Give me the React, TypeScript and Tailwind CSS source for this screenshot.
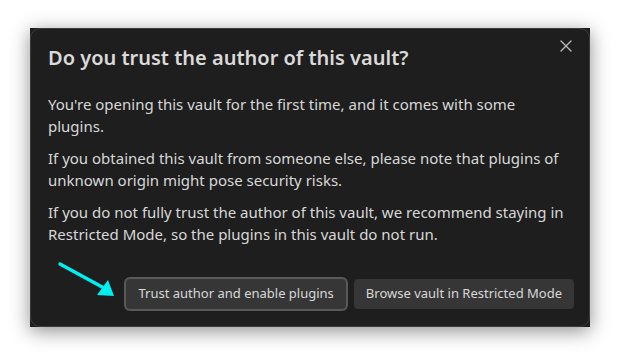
import React from 'react';

const font = { fontFamily: '"Noto Sans", "Open Sans", sans-serif' };

function CloseIcon() {
  return (
    <svg width="12" height="12" viewBox="0 0 12 12" className="text-[#b8b8b8]">
      <path d="M1 1 L11 11 M11 1 L1 11" stroke="currentColor" strokeWidth="1.4" strokeLinecap="round" />
    </svg>
  );
}

function PointerArrow() {
  return (
    <svg width="64" height="40" viewBox="0 0 64 40" className="absolute left-[56px] top-[258px]">
      <path d="M4 6 L48 30" stroke="#00f0f0" strokeWidth="3.5" strokeLinecap="round" />
      <path d="M58 38 L41 37 L52 22 Z" fill="#00f0f0" />
    </svg>
  );
}

export default function App() {
  return (
    <div className="relative h-[360px] w-[620px] bg-white pl-[30px] pt-[28px]" style={font}>
      <div className="h-[299px] w-[560px] bg-[#1e1e1e] shadow-[0_4px_18px_rgba(0,0,0,0.45)]">
        <div className="flex h-full flex-col rounded-[10px] border border-[#3c3c3c] pl-[17px] pr-[15px] pt-[14px] pb-[15px]">
          <div className="flex items-start justify-between">
            <h1 className="text-[20px] font-semibold leading-[30px] text-[#dadada]">
              Do you trust the author of this vault?
            </h1>
            <button type="button" className="mr-[-2px] mt-[-7px] p-1">
              <CloseIcon />
            </button>
          </div>
          <div className="mt-[20px] flex flex-col gap-[10px] text-[15px] leading-[22px] text-[#d8d8d8]">
            <p>You're opening this vault for the first time, and it comes with some plugins.</p>
            <p>
              If you obtained this vault from someone else, please note that plugins of unknown origin might pose
              security risks.
            </p>
            <p>
              If you do not fully trust the author of this vault, we recommend staying in Restricted Mode, so the
              plugins in this vault do not run.
            </p>
          </div>
          <div className="mt-auto flex items-center justify-end gap-[6px]">
            <button
              type="button"
              className="h-[34px] rounded-[6px] border-2 border-[#595959] bg-[#363636] px-[12px] text-[13px] text-[#d8d8d8]"
            >
              Trust author and enable plugins
            </button>
            <button
              type="button"
              className="h-[30px] rounded-[4px] bg-[#363636] px-[12px] text-[13px] text-[#d8d8d8]"
            >
              Browse vault in Restricted Mode
            </button>
          </div>
        </div>
      </div>
      <PointerArrow />
    </div>
  );
}
